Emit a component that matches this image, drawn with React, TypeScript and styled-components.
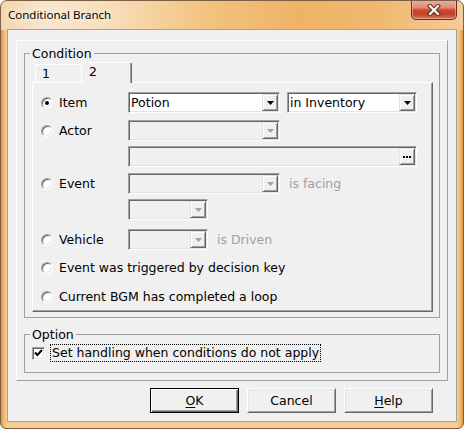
import React from 'react';
import styled, { createGlobalStyle } from 'styled-components';

const GlobalStyle = createGlobalStyle`
  html, body { margin: 0; padding: 0; background: #ffffff; }
  * { box-sizing: border-box; }
`;

const FONT = `"DejaVu Sans", Tahoma, sans-serif`;

const Window = styled.div`
  width: 464px;
  height: 429px;
  border: 1px solid #7b6046;
  border-radius: 7px 7px 6px 6px;
  padding: 0 6px 6px 6px;
  display: flex;
  flex-direction: column;
  overflow: hidden;
  background:
    linear-gradient(90deg, #f3d6ae 0%, #f9e7cf 10%, #f7dcb6 25%, #f2c27f 45%, #efb366 65%, #f0b96f 82%, #f4cc98 100%) top / 100% 29px no-repeat,
    linear-gradient(90deg, #e09a45 0px, #f0bb72 3px, #f5cd95 6px, #f5cd95 calc(100% - 6px), #f0bb72 calc(100% - 3px), #e09a45 100%);
`;

const TitleBar = styled.div`
  height: 28px;
  display: flex;
  align-items: flex-start;
  justify-content: space-between;
`;

const Title = styled.span`
  margin: 6px 0 0 1px;
  font: 11.5px/16px "Segoe UI", "Noto Sans", sans-serif;
  color: #000;
  text-shadow: 0 0 5px #fff5e8, 0 0 8px #fff5e8;
`;

const CloseButton = styled.div`
  margin-top: -1px;
  width: 46px;
  height: 20px;
  border: 1px solid #6d2a1f;
  border-top: none;
  border-radius: 0 0 5px 5px;
  background: linear-gradient(180deg, #eab0a2 0%, #e08a74 40%, #c9452b 55%, #c44129 75%, #da7a62 100%);
  box-shadow: inset 0 0 0 1px rgba(255, 220, 210, 0.45);
  display: flex;
  align-items: center;
  justify-content: center;
`;

const Client = styled.div`
  flex: 1;
  background: #f0f0f0;
  border: 1px solid #a8a29b;
  display: flex;
  flex-direction: column;
  padding: 10px 8px 0 8px;
`;

const Panel = styled.div`
  height: 341px;
  border-top: 1px solid #fff;
  border-left: 1px solid #fff;
  border-right: 1px solid #a0a0a0;
  border-bottom: 1px solid #a0a0a0;
  padding: 5px 7px 0 7px;
  display: flex;
  flex-direction: column;
`;

const Group = styled.fieldset<{ $mt?: number; $pt: number; $pb: number }>`
  margin: ${p => p.$mt ?? 0}px 0 0 0;
  min-width: 0;
  border: 1px solid #a0a0a0;
  padding: ${p => p.$pt}px 6px ${p => p.$pb}px 7px;
  font: 12.5px ${FONT};
  color: #000;
`;

const Legend = styled.legend`
  padding: 0 2px;
  margin-left: -2px;
  font: 12.5px/15px ${FONT};
  color: #000;
`;

const TabStrip = styled.div`
  display: flex;
  align-items: flex-end;
  height: 20px;
  padding-left: 3px;
  position: relative;
  z-index: 1;
`;

const Tab = styled.div<{ $active?: boolean; $w: number }>`
  width: ${p => p.$w}px;
  height: ${p => (p.$active ? 21 : 18)}px;
  margin-bottom: ${p => (p.$active ? -1 : 0)}px;
  background: #f0f0f0;
  border-top: 1px solid #fff;
  border-left: 1px solid #fff;
  border-right: ${p => (p.$active ? '1px solid #696969' : 'none')};
  box-shadow: ${p => (p.$active ? 'inset -1px 0 #a0a0a0' : 'none')};
  border-radius: 2px 2px 0 0;
  padding-left: ${p => (p.$active ? 7 : 6)}px;
  padding-top: 1px;
  font: 12.5px/15px ${FONT};
`;

const TabPage = styled.div`
  height: 230px;
  border-top: 1px solid #fff;
  border-left: 1px solid #fff;
  border-right: 1px solid #696969;
  border-bottom: 1px solid #696969;
  box-shadow: inset -1px -1px #a0a0a0;
  padding: 9px 0 0 8px;
  display: flex;
  flex-direction: column;
`;

const Row = styled.div<{ $mt?: number }>`
  display: flex;
  align-items: center;
  height: 21px;
  margin-top: ${p => p.$mt ?? 0}px;
`;

const OptionLabel = styled.label<{ $w?: number }>`
  display: flex;
  align-items: center;
  gap: 6px;
  width: ${p => (p.$w ? `${p.$w}px` : 'auto')};
  font: 12.5px/15px ${FONT};
  color: #000;
  white-space: nowrap;
`;

const Radio = styled.span<{ $on?: boolean }>`
  position: relative;
  width: 12px;
  height: 12px;
  border-radius: 50%;
  background: #fff;
  border: 1px solid;
  border-color: #a0a0a0 #fff #fff #a0a0a0;
  box-shadow: inset 1px 1px 0 #696969, inset -1px -1px 0 #e3e3e3;
  flex: none;
  &::after {
    content: '';
    display: ${p => (p.$on ? 'block' : 'none')};
    position: absolute;
    left: 3px;
    top: 3px;
    width: 4px;
    height: 4px;
    border-radius: 50%;
    background: #000;
  }
`;

const Combo = styled.div<{ $w: number; $disabled?: boolean; $ml?: number }>`
  width: ${p => p.$w}px;
  height: 21px;
  margin-left: ${p => p.$ml ?? 0}px;
  display: flex;
  align-items: center;
  justify-content: space-between;
  background: ${p => (p.$disabled ? '#f0f0f0' : '#fff')};
  border: 1px solid;
  border-color: #a0a0a0 #fff #fff #a0a0a0;
  box-shadow: inset 1px 1px 0 #696969, inset -1px -1px 0 #e3e3e3;
  padding: 0 1px 0 2px;
  font: 12.5px/15px ${FONT};
  color: #000;
  white-space: nowrap;
`;

const DropButton = styled.div`
  width: 16px;
  height: 17px;
  flex: none;
  background: #f0f0f0;
  border: 1px solid;
  border-color: #e3e3e3 #696969 #696969 #e3e3e3;
  box-shadow: inset 1px 1px 0 #fff, inset -1px -1px 0 #a0a0a0;
  display: flex;
  align-items: center;
  justify-content: center;
`;

const Hint = styled.span<{ $ml: number }>`
  margin-left: ${p => p.$ml}px;
  font: 12.5px/15px ${FONT};
  color: #a0a0a0;
`;

const Indent = styled.div`
  width: 87px;
  flex: none;
`;

const CheckRow = styled.div`
  display: flex;
  align-items: center;
  height: 18px;
  margin-top: 2px;
`;

const CheckBox = styled.span`
  width: 13px;
  height: 13px;
  flex: none;
  background: #fff;
  border: 1px solid;
  border-color: #a0a0a0 #fff #fff #a0a0a0;
  box-shadow: inset 1px 1px 0 #696969, inset -1px -1px 0 #e3e3e3;
  display: flex;
  align-items: center;
  justify-content: center;
`;

const FocusLabel = styled.span`
  margin-left: 5px;
  height: 18px;
  padding: 0 1px;
  border: 1px dotted #000;
  font: 12.5px/16px ${FONT};
  color: #000;
  white-space: nowrap;
`;

const ButtonRow = styled.div`
  display: flex;
  justify-content: flex-end;
  gap: 8px;
  margin-top: 7px;
  padding-right: 15px;
`;

const PushButton = styled.button<{ $default?: boolean }>`
  width: 89px;
  height: 25px;
  padding: 0;
  background: #f0f0f0;
  font: 12.5px ${FONT};
  color: #000;
  border: 1px solid;
  border-color: ${p => (p.$default ? '#000' : '#fff #696969 #696969 #fff')};
  box-shadow: ${p =>
    p.$default
      ? 'inset 1px 1px 0 #fff, inset -1px -1px 0 #696969, inset -2px -2px 0 #a0a0a0'
      : 'inset 1px 1px 0 #e3e3e3, inset -1px -1px 0 #a0a0a0'};
  & u { text-decoration: underline; text-underline-offset: 2px; }
`;

const Arrow = ({ disabled }: { disabled?: boolean }) => (
  <svg width="7" height="4" viewBox="0 0 7 4">
    <polygon points="0,0 7,0 3.5,4" fill={disabled ? '#a0a0a0' : '#000'} />
  </svg>
);

const Dots = () => (
  <svg width="8" height="2" viewBox="0 0 8 2">
    <rect x="0" y="0" width="2" height="2" fill="#000" />
    <rect x="3" y="0" width="2" height="2" fill="#000" />
    <rect x="6" y="0" width="2" height="2" fill="#000" />
  </svg>
);

const CloseGlyph = () => (
  <svg width="14" height="12" viewBox="0 0 14 12">
    <path d="M3 2 L11 10 M11 2 L3 10" stroke="#5a2a22" strokeWidth="4.2" strokeLinecap="square" />
    <path d="M3 2 L11 10 M11 2 L3 10" stroke="#ffffff" strokeWidth="2.2" strokeLinecap="square" />
  </svg>
);

const Check = () => (
  <svg width="9" height="8" viewBox="0 0 9 8">
    <path d="M1 3.5 L3.3 6 L8 1" stroke="#000" strokeWidth="1.9" fill="none" />
  </svg>
);

export default function App() {
  return (
    <>
      <GlobalStyle />
      <Window>
        <TitleBar>
          <Title>Conditional Branch</Title>
          <CloseButton>
            <CloseGlyph />
          </CloseButton>
        </TitleBar>
        <Client>
          <Panel>
            <Group $pt={1} $pb={5}>
              <Legend>Condition</Legend>
              <TabStrip>
                <Tab $w={46}>1</Tab>
                <Tab $w={51} $active>2</Tab>
              </TabStrip>
              <TabPage>
                <Row>
                  <OptionLabel $w={87}>
                    <Radio $on />
                    Item
                  </OptionLabel>
                  <Combo $w={152}>
                    <span>Potion</span>
                    <DropButton><Arrow /></DropButton>
                  </Combo>
                  <Combo $w={130} $ml={7}>
                    <span>in Inventory</span>
                    <DropButton><Arrow /></DropButton>
                  </Combo>
                </Row>
                <Row $mt={7}>
                  <OptionLabel $w={87}>
                    <Radio />
                    Actor
                  </OptionLabel>
                  <Combo $w={152} $disabled>
                    <span />
                    <DropButton><Arrow disabled /></DropButton>
                  </Combo>
                </Row>
                <Row $mt={5}>
                  <Indent />
                  <Combo $w={289} $disabled>
                    <span />
                    <DropButton><Dots /></DropButton>
                  </Combo>
                </Row>
                <Row $mt={6}>
                  <OptionLabel $w={87}>
                    <Radio />
                    Event
                  </OptionLabel>
                  <Combo $w={152} $disabled>
                    <span />
                    <DropButton><Arrow disabled /></DropButton>
                  </Combo>
                  <Hint $ml={9}>is facing</Hint>
                </Row>
                <Row $mt={5}>
                  <Indent />
                  <Combo $w={80} $disabled>
                    <span />
                    <DropButton><Arrow disabled /></DropButton>
                  </Combo>
                </Row>
                <Row $mt={9}>
                  <OptionLabel $w={87}>
                    <Radio />
                    Vehicle
                  </OptionLabel>
                  <Combo $w={80} $disabled>
                    <span />
                    <DropButton><Arrow disabled /></DropButton>
                  </Combo>
                  <Hint $ml={9}>is Driven</Hint>
                </Row>
                <Row $mt={7}>
                  <OptionLabel>
                    <Radio />
                    Event was triggered by decision key
                  </OptionLabel>
                </Row>
                <Row $mt={8}>
                  <OptionLabel>
                    <Radio />
                    Current BGM has completed a loop
                  </OptionLabel>
                </Row>
              </TabPage>
            </Group>
            <Group $mt={9} $pt={0} $pb={10}>
              <Legend>Option</Legend>
              <CheckRow>
                <CheckBox><Check /></CheckBox>
                <FocusLabel>Set handling when conditions do not apply</FocusLabel>
              </CheckRow>
            </Group>
          </Panel>
          <ButtonRow>
            <PushButton $default><u>O</u>K</PushButton>
            <PushButton>Cancel</PushButton>
            <PushButton><u>H</u>elp</PushButton>
          </ButtonRow>
        </Client>
      </Window>
    </>
  );
}
